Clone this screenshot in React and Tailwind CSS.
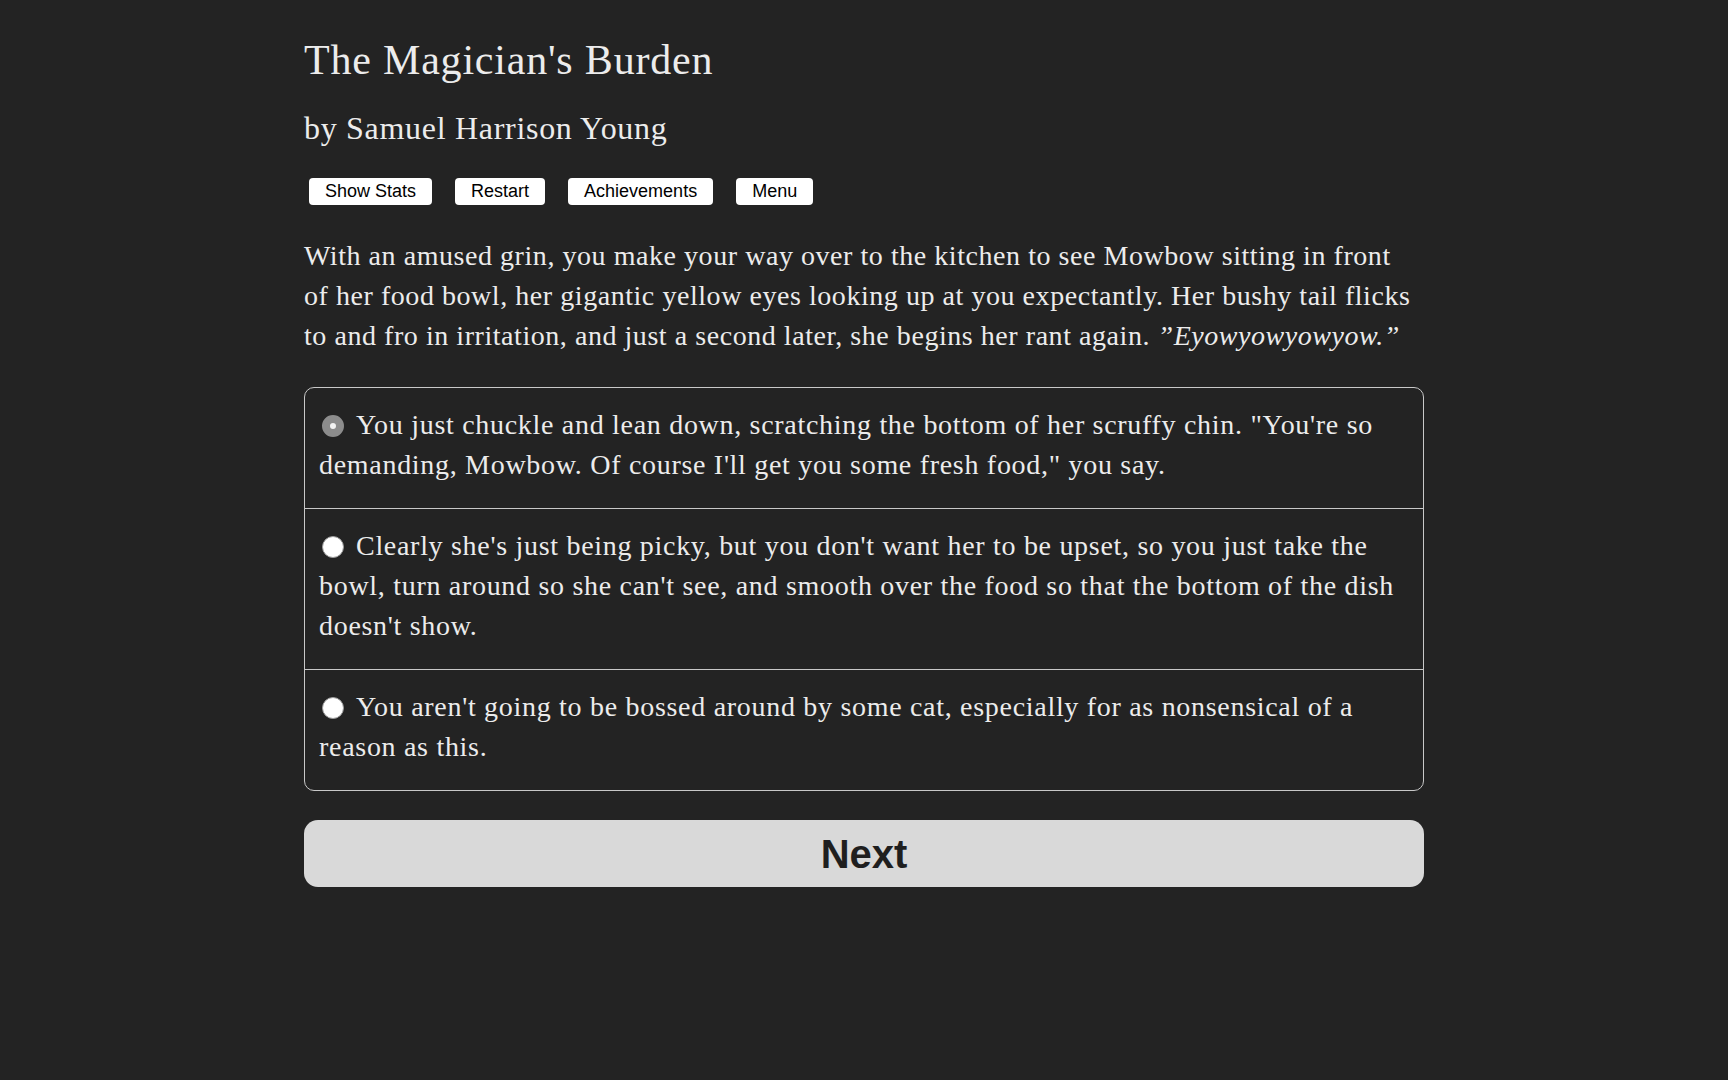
import React, { useState } from 'react';

const choices = [
  `You just chuckle and lean down, scratching the bottom of her scruffy chin. "You're so demanding, Mowbow. Of course I'll get you some fresh food," you say.`,
  `Clearly she's just being picky, but you don't want her to be upset, so you just take the bowl, turn around so she can't see, and smooth over the food so that the bottom of the dish doesn't show.`,
  `You aren't going to be bossed around by some cat, especially for as nonsensical of a reason as this.`,
];

const Radio = ({ checked }) =>
  checked ? (
    <span className="inline-block w-[22px] h-[22px] rounded-full border-[8px] border-[#8c8c8c] bg-[#f2f2f2] align-[-3px] ml-[3px] mr-[12px]" />
  ) : (
    <span className="inline-block w-[22px] h-[22px] rounded-full bg-white border border-[#9a9a9a] align-[-3px] ml-[3px] mr-[12px]" />
  );

export default function App() {
  const [selected, setSelected] = useState(0);
  const serif = { fontFamily: '"Liberation Serif", "Times New Roman", serif' };

  return (
    <div className="min-h-screen w-full bg-[#232323] text-[#ececec]" style={serif}>
      <div className="w-[1120px] mx-auto pt-[35px]">
        <h1 className="text-[42px] leading-[50px] tracking-[0.8px]">The Magician's Burden</h1>
        <h2 className="text-[32px] leading-[40px] tracking-[0.7px] mt-[23px]">by Samuel Harrison Young</h2>

        <div className="flex gap-[23px] mt-[30px] ml-[5px] font-['Liberation_Sans',Arial,sans-serif]">
          {['Show Stats', 'Restart', 'Achievements', 'Menu'].map((b) => (
            <button key={b} className="h-[27px] px-[16px] bg-white text-black text-[18px] leading-[27px] rounded-[4px]">
              {b}
            </button>
          ))}
        </div>

        <p className="mt-[31px] text-[28px] leading-[40px] tracking-[0.55px]">
          With an amused grin, you make your way over to the kitchen to see Mowbow sitting in front<br />
          of her food bowl, her gigantic yellow eyes looking up at you expectantly. Her bushy tail flicks<br />
          to and fro in irritation, and just a second later, she begins her rant again. <i>”Eyowyowyowyow.”</i>
        </p>

        <div className="mt-[31px] border border-[#c8c8c8] rounded-[10px] overflow-hidden">
          {choices.map((c, i) => (
            <div
              key={i}
              onClick={() => setSelected(i)}
              className={`px-[14px] pt-[17px] pb-[23px] text-[28px] leading-[40px] tracking-[0.7px] cursor-pointer ${i > 0 ? 'border-t border-[#c8c8c8]' : ''}`}
            >
              <Radio checked={selected === i} />
              {c}
            </div>
          ))}
        </div>

        <button className="mt-[29px] w-full h-[67px] rounded-[14px] bg-[#d9d9d9] text-[#1f1f1f] text-[40px] font-bold font-['Liberation_Sans',Arial,sans-serif]">
          Next
        </button>
      </div>
    </div>
  );
}
